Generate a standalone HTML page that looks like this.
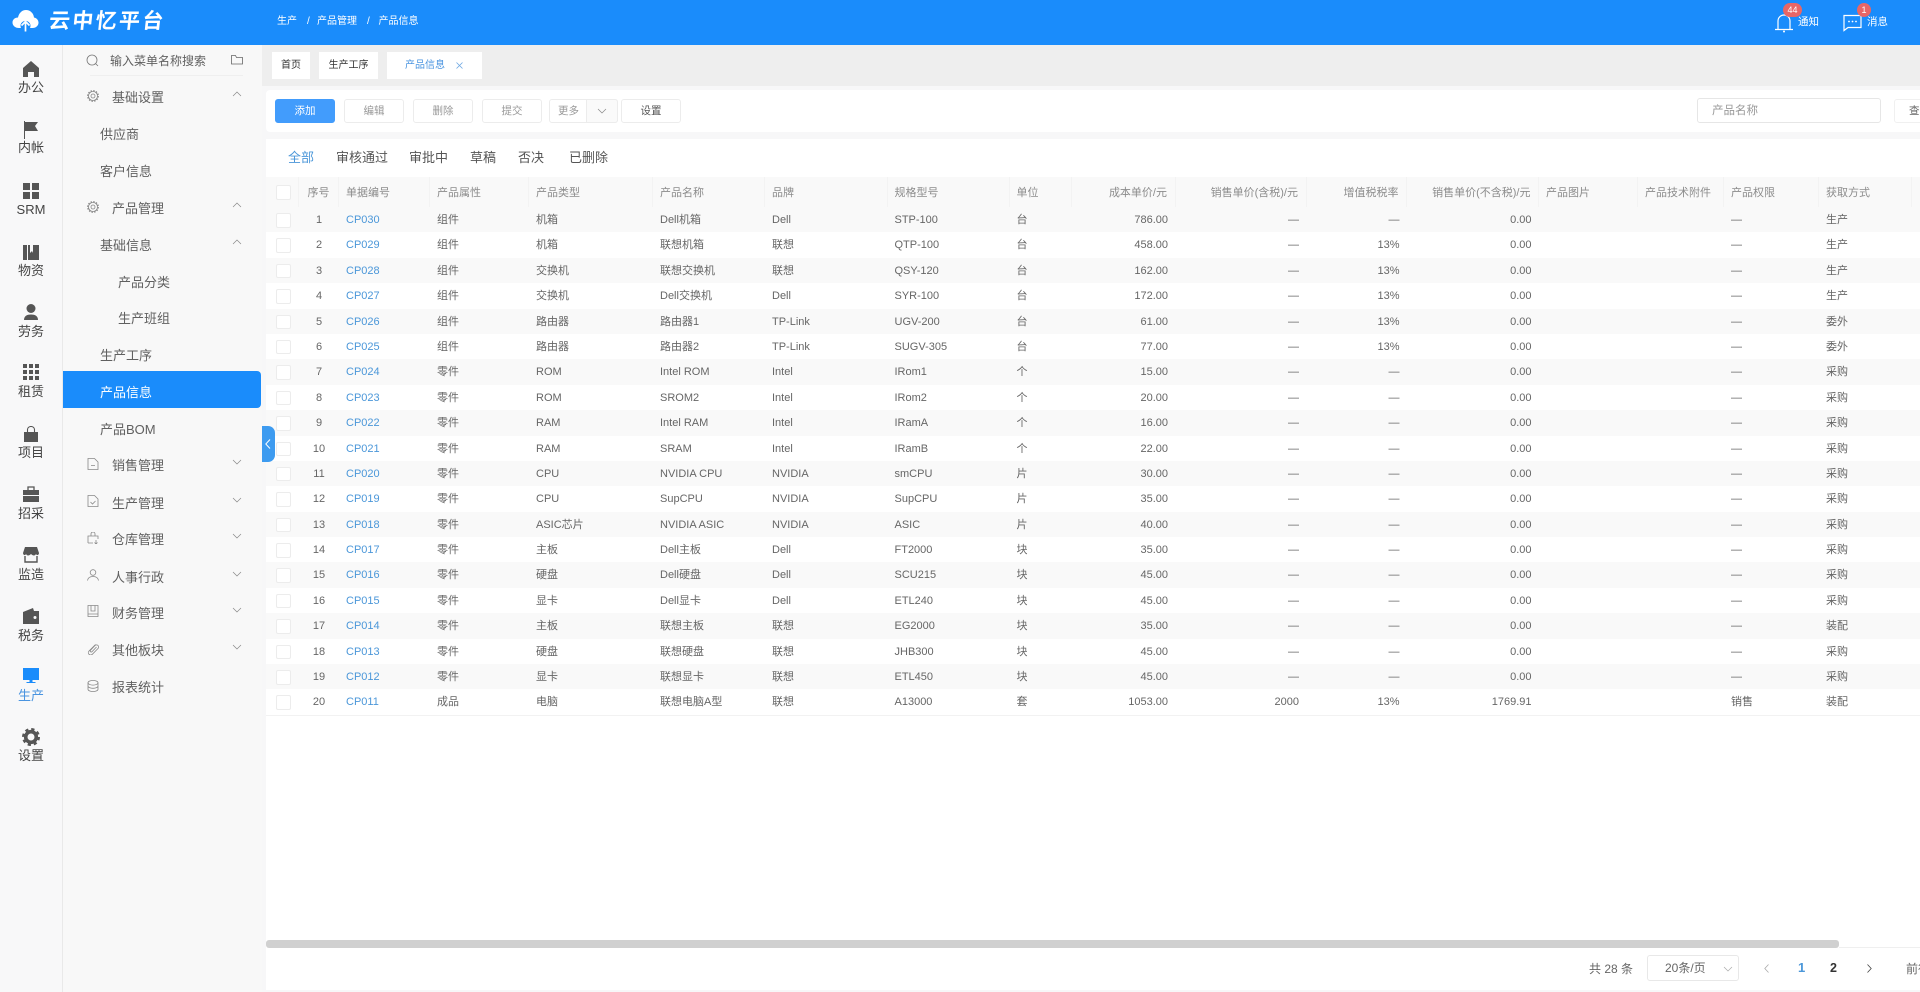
<!DOCTYPE html>
<html lang="zh-CN"><head><meta charset="utf-8"><title>产品信息</title>
<style>
*{box-sizing:border-box;margin:0;padding:0}
html{width:1920px;height:992px;overflow:hidden;background:#f7f7f8}
body{width:1920px;height:992px;overflow:hidden;background:#f7f7f8;font-family:"Liberation Sans","Noto Sans CJK SC",sans-serif;color:#555;filter:blur(.3px)}
.a{position:absolute;white-space:nowrap}
#hd{position:absolute;left:0;top:0;width:1920px;height:45px;background:#1a8cfb;color:#fff}
#rail{position:absolute;left:0;top:45px;width:63px;height:947px;background:#f8f8f9;border-right:1px solid #e9e9e9}
.ic{position:absolute;left:23px;width:16px;height:16px}
.lb{position:absolute;left:0;width:62px;text-align:center;font-size:13px;line-height:16px;color:#444;margin-top:1px}
#menu{position:absolute;left:63px;top:45px;width:199px;height:947px;background:#f8f8f8}
.m{position:absolute;font-size:13px;line-height:18px;color:#606060;white-space:nowrap;margin-top:1px}
.mi{position:absolute;left:24px;width:12px;height:12px}
.ch{position:absolute;left:169px;width:10px;height:6px}
#tabs{position:absolute;left:262px;top:45px;width:1658px;height:41px;background:#eeeeee}
.tab{position:absolute;top:52px;height:27px;background:#fff;font-size:10px;line-height:27px;text-align:center;color:#333}
.pn{position:absolute;left:266px;background:#fff}
.btn{position:absolute;top:99px;height:24px;width:60px;border:1px solid #ececec;border-radius:3px;background:#fff;font-size:10.5px;line-height:23px;text-align:center;color:#999}
.t{position:absolute;top:149px;font-size:13px;line-height:18px;color:#555;white-space:nowrap}
#tb{position:absolute;left:266px;top:177px;width:1654px;overflow:hidden}
.r{display:grid;grid-template-columns:33px 40px 91px 99px 124px 112px 122.5px 122px 62.5px 103.5px 131px 100.5px 132px 99px 86px 95px 93px 60px;height:25.4px;font-size:11px;line-height:25.4px;color:#666;background:#fff}
.r:nth-child(even){background:#f9f9f9}
.r span{padding:1px 7.5px 0 7px;white-space:nowrap;overflow:hidden}
.r span:nth-child(2){text-align:center;padding:1px 0 0}
.r span:nth-child(3){color:#4b97d9}
.r span:nth-child(10),.r span:nth-child(11),.r span:nth-child(12),.r span:nth-child(13){text-align:right}
.r span:nth-child(1){padding:0;position:relative}
.r span:nth-child(1)::after{content:"";position:absolute;left:10px;top:6px;width:12.5px;height:12.5px;background:#fff;border:1px solid #ececec;border-radius:2px}
.h{height:30px;line-height:30px;background:#f9f9f9!important;color:#8c8c8c}
.h span{border-right:1px solid #f3f3f3;color:#8c8c8c!important}
.h span:nth-child(1)::after{top:8px!important}
</style></head><body>

<div id="hd">
<svg class="a" style="left:12px;top:9px" width="27" height="23" viewBox="0 0 27 23"><path fill="#fff" d="M7 19C3 19 .5 16.500 .5 13.500S3 8.500 6 8.500C7 4 10 1 14 1s7.500 3 8 7.500c2.500.5 4.500 2.500 4.500 5.200S24 19 20.500 19h-2.500a5 5 0 1 0-9 0Z"/><path fill="none" stroke="#fff" stroke-width="1.700" d="M13.500 22.500V13M9.500 16.500l4-4 4 4"/></svg>
<div class="a" style="left:49px;top:7px;font-size:21px;line-height:30px;font-weight:700;letter-spacing:2.3px;transform:skewX(-6deg);transform-origin:left center">云中忆平台</div>
<div class="a" style="left:277px;top:14px;font-size:10px;line-height:16px">生产</div>
<div class="a" style="left:307px;top:14px;font-size:10px;line-height:16px">/</div>
<div class="a" style="left:317px;top:14px;font-size:10px;line-height:16px">产品管理</div>
<div class="a" style="left:367px;top:14px;font-size:10px;line-height:16px">/</div>
<div class="a" style="left:378.500px;top:14px;font-size:10px;line-height:16px">产品信息</div>
<svg class="a" style="left:1774px;top:12px" width="20" height="21" viewBox="0 0 20 21"><path fill="none" stroke="#fff" stroke-width="1.200" d="M1 17.500h18M4 17.500V9a6 6 0 0 1 12 0v8.500"/><circle cx="10" cy="19.500" r="1" fill="#fff"/></svg>
<div class="a" style="left:1783px;top:3px;width:19px;height:14px;border-radius:7px;background:#e86666;font-size:9px;line-height:14px;text-align:center">44</div>
<div class="a" style="left:1798px;top:14px;font-size:10.500px;line-height:16px">通知</div>
<svg class="a" style="left:1843px;top:14px" width="19" height="18" viewBox="0 0 19 18"><path fill="none" stroke="#fff" stroke-width="1.200" d="M1 1.500h17v12H5l-4 3Z"/><circle cx="6" cy="7.500" r=".9" fill="#fff"/><circle cx="9.500" cy="7.500" r=".9" fill="#fff"/><circle cx="13" cy="7.500" r=".9" fill="#fff"/></svg>
<div class="a" style="left:1857px;top:3px;width:14px;height:14px;border-radius:7px;background:#e86666;font-size:9px;line-height:14px;text-align:center">1</div>
<div class="a" style="left:1867px;top:14px;font-size:10.500px;line-height:16px">消息</div>
</div>

<div id="rail">
<svg class="ic" style="top:16px" viewBox="0 0 16 16"><path fill="#555" d="M8 0 16 7v9h-5v-5H5v5H0V7Z"/></svg><div class="lb" style="top:34px">办公</div>
<svg class="ic" style="top:76px;height:18px" viewBox="0 0 16 18"><path fill="#555" d="M1 0h1v18H1zM2 1h13l-3 4 3 5H2z"/></svg><div class="lb" style="top:94px">内帐</div>
<svg class="ic" style="top:138px" viewBox="0 0 16 16"><path fill="#555" d="M0 0h7v7H0zM9 0h7v7H9zM0 9h7v7H0zM9 9h7v7H9z"/></svg><div class="lb" style="top:156px">SRM</div>
<svg class="ic" style="top:199px" viewBox="0 0 16 16"><path fill="#555" d="M0 1h4v15H0zM5 1h2v8l2-2 1 2V1h6v15H5z"/></svg><div class="lb" style="top:217px">物资</div>
<svg class="ic" style="top:259px" viewBox="0 0 16 16"><circle cx="8" cy="4.500" r="4.500" fill="#555"/><path fill="#555" d="M1 16c0-4 3-5.500 7-5.500s7 1.500 7 5.500Z"/></svg><div class="lb" style="top:278px">劳务</div>
<svg class="ic" style="top:319px" viewBox="0 0 16 16"><path fill="#555" d="M0 0h4v4H0zM6 0h4v4H6zM12 0h4v4h-4zM0 6h4v4H0zM6 6h4v4H6zM12 6h4v4h-4zM0 12h4v4H0zM6 12h4v4H6zM12 12h4v4h-4z"/></svg><div class="lb" style="top:338px">租赁</div>
<svg class="ic" style="top:381px" viewBox="0 0 16 16"><path fill="#555" d="M1 6h14v10H1z"/><path fill="none" stroke="#555" stroke-width="1.100" d="M4.500 6V3.500a3.500 3 0 0 1 7 0V6"/></svg><div class="lb" style="top:399px">项目</div>
<svg class="ic" style="top:441px" viewBox="0 0 16 16"><path fill="#555" d="M0 4h16v5H0zM0 10h16v6H0z"/><path fill="none" stroke="#555" stroke-width="1.300" d="M5 4V1h6v3"/></svg><div class="lb" style="top:460px">招采</div>
<svg class="ic" style="top:502px" viewBox="0 0 16 16"><path fill="#555" d="M2 0h12l2 6c0 2-2 3-3 1-1 2-3 2-5 0-2 2-4 2-5 0-1 2-3 1-3-1Z"/><path fill="none" stroke="#555" stroke-width="1.400" d="M2 9v6h12V9"/></svg><div class="lb" style="top:521px">监造</div>
<svg class="ic" style="top:563px" viewBox="0 0 16 16"><path fill="#555" d="M0 4l10-4 1 3h5v13H0z"/><circle cx="12" cy="9.500" r="1.500" fill="#f8f8f9"/></svg><div class="lb" style="top:582px">税务</div>
<svg class="ic" style="top:623px" viewBox="0 0 16 16"><path fill="#1a8cfb" d="M0 0h16v12H0zM6.500 12h3v2h3v1h-9v-1h3z"/></svg><div class="lb" style="top:642px;color:#4a94e0">生产</div>
<svg class="ic" style="top:683px;left:22px;width:18px;height:18px" viewBox="0 0 18 18"><circle cx="9" cy="9" r="5.300" fill="none" stroke="#555" stroke-width="3.600"/><circle cx="9" cy="9" r="7.500" fill="none" stroke="#555" stroke-width="3" stroke-dasharray="3.100 2.790"/></svg><div class="lb" style="top:702px">设置</div>
</div>

<div id="menu">
<svg class="a" style="left:23px;top:9px" width="13" height="13" viewBox="0 0 13 13"><circle cx="6" cy="6" r="5" fill="none" stroke="#777" stroke-width=".8"/><path d="M9.500 9.500l2.500 2.500" stroke="#777" stroke-width=".8"/></svg>
<div class="m" style="left:47px;top:7px;font-size:12px;margin-top:0">输入菜单名称搜索</div>
<svg class="a" style="left:168px;top:10px" width="12" height="10" viewBox="0 0 12 10"><path fill="none" stroke="#666" stroke-width=".8" d="M.5 9V.5h4l1 2h6V9Z"/></svg>
<div class="a" style="left:27px;top:30px;width:153px;height:1px;background:#efefef"></div>

<svg class="mi" style="top:45px" viewBox="0 0 12 12"><circle cx="6" cy="6" r="4.500" fill="none" stroke="#888" stroke-width=".8"/><circle cx="6" cy="6" r="5.300" fill="none" stroke="#888" stroke-width="1.200" stroke-dasharray="1.500 1.280"/><circle cx="6" cy="6" r="2" fill="none" stroke="#888" stroke-width=".8"/></svg>
<div class="m" style="left:49px;top:43px">基础设置</div>
<svg class="ch" style="top:46px" viewBox="0 0 10 6"><path fill="none" stroke="#888" stroke-width=".7" d="M1 5l4-4 4 4"/></svg>
<div class="m" style="left:37px;top:80px">供应商</div>
<div class="m" style="left:37px;top:117px">客户信息</div>
<svg class="mi" style="top:156px" viewBox="0 0 12 12"><circle cx="6" cy="6" r="4.500" fill="none" stroke="#888" stroke-width=".8"/><circle cx="6" cy="6" r="5.300" fill="none" stroke="#888" stroke-width="1.200" stroke-dasharray="1.500 1.280"/><circle cx="6" cy="6" r="2" fill="none" stroke="#888" stroke-width=".8"/></svg>
<div class="m" style="left:49px;top:154px">产品管理</div>
<svg class="ch" style="top:157px" viewBox="0 0 10 6"><path fill="none" stroke="#888" stroke-width=".7" d="M1 5l4-4 4 4"/></svg>
<div class="m" style="left:37px;top:191px">基础信息</div>
<svg class="ch" style="top:194px" viewBox="0 0 10 6"><path fill="none" stroke="#888" stroke-width=".7" d="M1 5l4-4 4 4"/></svg>
<div class="m" style="left:55px;top:228px">产品分类</div>
<div class="m" style="left:55px;top:264px">生产班组</div>
<div class="m" style="left:37px;top:301px">生产工序</div>
<div class="a" style="left:0;top:326px;width:198px;height:37px;background:#1a8cfb;border-radius:0 4px 4px 0"></div>
<div class="m" style="left:37px;top:338px;color:#fff">产品信息</div>
<div class="m" style="left:37px;top:375px">产品BOM</div>

<svg class="mi" style="top:413px" viewBox="0 0 12 12"><path fill="none" stroke="#888" stroke-width=".8" d="M1 .5h6.500L11 4v7.500H1ZM4 7.500h4"/></svg>
<div class="m" style="left:49px;top:411px">销售管理</div>
<svg class="ch" style="top:414px" viewBox="0 0 10 6"><path fill="none" stroke="#888" stroke-width=".7" d="M1 1l4 4 4-4"/></svg>
<svg class="mi" style="top:450px" viewBox="0 0 12 12"><path fill="none" stroke="#888" stroke-width=".8" d="M1 .5h6.500L11 4v7.500H1ZM3.500 7l2 2 3-3"/></svg>
<div class="m" style="left:49px;top:449px">生产管理</div>
<svg class="ch" style="top:452px" viewBox="0 0 10 6"><path fill="none" stroke="#888" stroke-width=".7" d="M1 1l4 4 4-4"/></svg>
<svg class="mi" style="top:487px" viewBox="0 0 12 12"><path fill="none" stroke="#888" stroke-width=".8" d="M1 11V4h10v3M4 4V2a2 2 0 0 1 4 0v2M1 11h5M9 8v3.500M7.500 10.500l1.500 1.500 1.500-1.500"/></svg>
<div class="m" style="left:49px;top:485px">仓库管理</div>
<svg class="ch" style="top:488px" viewBox="0 0 10 6"><path fill="none" stroke="#888" stroke-width=".7" d="M1 1l4 4 4-4"/></svg>
<svg class="mi" style="top:524px" viewBox="0 0 12 12"><circle cx="6" cy="3.500" r="2.800" fill="none" stroke="#888" stroke-width=".8"/><path fill="none" stroke="#888" stroke-width=".8" d="M.5 11.500c.5-3 3-4 5.500-4s5 1 5.500 4"/></svg>
<div class="m" style="left:49px;top:523px">人事行政</div>
<svg class="ch" style="top:526px" viewBox="0 0 10 6"><path fill="none" stroke="#888" stroke-width=".7" d="M1 1l4 4 4-4"/></svg>
<svg class="mi" style="top:560px" viewBox="0 0 12 12"><path fill="none" stroke="#888" stroke-width=".8" d="M1 .5h10v11H1ZM1 9h10M4 .5V6h4V.5"/></svg>
<div class="m" style="left:49px;top:559px">财务管理</div>
<svg class="ch" style="top:562px" viewBox="0 0 10 6"><path fill="none" stroke="#888" stroke-width=".7" d="M1 1l4 4 4-4"/></svg>
<svg class="mi" style="top:598px" viewBox="0 0 12 12"><path fill="none" stroke="#888" stroke-width=".8" d="M8.500 1.500 2 8a2.300 2.300 0 0 0 3.300 3.300L11 5.500A2.100 2.100 0 0 0 8 2.500L3.500 7.200a1 1 0 0 0 1.500 1.500L9.500 4"/></svg>
<div class="m" style="left:49px;top:596px">其他板块</div>
<svg class="ch" style="top:599px" viewBox="0 0 10 6"><path fill="none" stroke="#888" stroke-width=".7" d="M1 1l4 4 4-4"/></svg>
<svg class="mi" style="top:635px" viewBox="0 0 12 12"><ellipse cx="6" cy="2.800" rx="5" ry="2.300" fill="none" stroke="#888" stroke-width=".8"/><path fill="none" stroke="#888" stroke-width=".8" d="M1 2.800v6.400c0 1.300 2.200 2.300 5 2.300s5-1 5-2.300V2.800M1 6c0 1.300 2.200 2.300 5 2.300S11 7.300 11 6"/></svg>
<div class="m" style="left:49px;top:633px">报表统计</div>
</div>

<div id="tabs"></div>
<div class="tab" style="left:272px;width:38px">首页</div>
<div class="tab" style="left:319px;width:59px">生产工序</div>
<div class="tab" style="left:387px;width:95px"></div>
<div class="a" style="left:405px;top:52px;font-size:10px;line-height:27px;color:#4a94e0">产品信息</div>
<svg class="a" style="left:456px;top:62px" width="7" height="7" viewBox="0 0 7 7"><path d="M.5.500l6 6M6.500.5l-6 6" stroke="#6da7e2" stroke-width=".8"/></svg>

<div class="pn" style="top:90px;width:1654px;height:42px;border-radius:4px 0 0 4px"></div>
<div class="btn" style="left:275px;background:#429cfc;border-color:#429cfc;color:#fff">添加</div>
<div class="btn" style="left:344px">编辑</div>
<div class="btn" style="left:413px">删除</div>
<div class="btn" style="left:482px">提交</div>
<div class="btn" style="left:549px;width:69px;text-align:left;padding-left:8px">更多</div>
<div class="a" style="left:586px;top:99px;width:32px;height:24px;background:#fafafa;border:1px solid #ececec;border-radius:0 3px 3px 0"></div>
<svg class="a" style="left:597px;top:108px" width="10" height="6" viewBox="0 0 10 6"><path fill="none" stroke="#888" stroke-width=".7" d="M1 1l4 4 4-4"/></svg>
<div class="btn" style="left:621px;color:#555">设置</div>
<div class="a" style="left:1697px;top:98px;width:184px;height:25px;border:1px solid #e6e6e6;border-radius:3px;font-size:11.500px;line-height:25px;padding-left:14px;color:#999">产品名称</div>
<div class="a" style="left:1894px;top:99px;width:60px;height:24px;border:1px solid #f0f0f0;border-radius:3px;font-size:10.500px;line-height:23px;padding-left:14px;color:#666">查询</div>

<div class="pn" style="top:139px;width:1654px;height:851px"></div>
<div class="t" style="left:288px;color:#4b97d9">全部</div>
<div class="t" style="left:336px">审核通过</div>
<div class="t" style="left:409px">审批中</div>
<div class="t" style="left:470px">草稿</div>
<div class="t" style="left:518px">否决</div>
<div class="t" style="left:569px">已删除</div>

<div id="tb">
<div class="r h"><span></span><span>序号</span><span>单据编号</span><span>产品属性</span><span>产品类型</span><span>产品名称</span><span>品牌</span><span>规格型号</span><span>单位</span><span>成本单价/元</span><span>销售单价(含税)/元</span><span>增值税税率</span><span>销售单价(不含税)/元</span><span>产品图片</span><span>产品技术附件</span><span>产品权限</span><span>获取方式</span><span></span></div>
<div class="r"><span></span><span>1</span><span>CP030</span><span>组件</span><span>机箱</span><span>Dell机箱</span><span>Dell</span><span>STP-100</span><span>台</span><span>786.00</span><span>—</span><span>—</span><span>0.00</span><span></span><span></span><span>—</span><span>生产</span><span></span></div>
<div class="r"><span></span><span>2</span><span>CP029</span><span>组件</span><span>机箱</span><span>联想机箱</span><span>联想</span><span>QTP-100</span><span>台</span><span>458.00</span><span>—</span><span>13%</span><span>0.00</span><span></span><span></span><span>—</span><span>生产</span><span></span></div>
<div class="r"><span></span><span>3</span><span>CP028</span><span>组件</span><span>交换机</span><span>联想交换机</span><span>联想</span><span>QSY-120</span><span>台</span><span>162.00</span><span>—</span><span>13%</span><span>0.00</span><span></span><span></span><span>—</span><span>生产</span><span></span></div>
<div class="r"><span></span><span>4</span><span>CP027</span><span>组件</span><span>交换机</span><span>Dell交换机</span><span>Dell</span><span>SYR-100</span><span>台</span><span>172.00</span><span>—</span><span>13%</span><span>0.00</span><span></span><span></span><span>—</span><span>生产</span><span></span></div>
<div class="r"><span></span><span>5</span><span>CP026</span><span>组件</span><span>路由器</span><span>路由器1</span><span>TP-Link</span><span>UGV-200</span><span>台</span><span>61.00</span><span>—</span><span>13%</span><span>0.00</span><span></span><span></span><span>—</span><span>委外</span><span></span></div>
<div class="r"><span></span><span>6</span><span>CP025</span><span>组件</span><span>路由器</span><span>路由器2</span><span>TP-Link</span><span>SUGV-305</span><span>台</span><span>77.00</span><span>—</span><span>13%</span><span>0.00</span><span></span><span></span><span>—</span><span>委外</span><span></span></div>
<div class="r"><span></span><span>7</span><span>CP024</span><span>零件</span><span>ROM</span><span>Intel ROM</span><span>Intel</span><span>IRom1</span><span>个</span><span>15.00</span><span>—</span><span>—</span><span>0.00</span><span></span><span></span><span>—</span><span>采购</span><span></span></div>
<div class="r"><span></span><span>8</span><span>CP023</span><span>零件</span><span>ROM</span><span>SROM2</span><span>Intel</span><span>IRom2</span><span>个</span><span>20.00</span><span>—</span><span>—</span><span>0.00</span><span></span><span></span><span>—</span><span>采购</span><span></span></div>
<div class="r"><span></span><span>9</span><span>CP022</span><span>零件</span><span>RAM</span><span>Intel RAM</span><span>Intel</span><span>IRamA</span><span>个</span><span>16.00</span><span>—</span><span>—</span><span>0.00</span><span></span><span></span><span>—</span><span>采购</span><span></span></div>
<div class="r"><span></span><span>10</span><span>CP021</span><span>零件</span><span>RAM</span><span>SRAM</span><span>Intel</span><span>IRamB</span><span>个</span><span>22.00</span><span>—</span><span>—</span><span>0.00</span><span></span><span></span><span>—</span><span>采购</span><span></span></div>
<div class="r"><span></span><span>11</span><span>CP020</span><span>零件</span><span>CPU</span><span>NVIDIA CPU</span><span>NVIDIA</span><span>smCPU</span><span>片</span><span>30.00</span><span>—</span><span>—</span><span>0.00</span><span></span><span></span><span>—</span><span>采购</span><span></span></div>
<div class="r"><span></span><span>12</span><span>CP019</span><span>零件</span><span>CPU</span><span>SupCPU</span><span>NVIDIA</span><span>SupCPU</span><span>片</span><span>35.00</span><span>—</span><span>—</span><span>0.00</span><span></span><span></span><span>—</span><span>采购</span><span></span></div>
<div class="r"><span></span><span>13</span><span>CP018</span><span>零件</span><span>ASIC芯片</span><span>NVIDIA ASIC</span><span>NVIDIA</span><span>ASIC</span><span>片</span><span>40.00</span><span>—</span><span>—</span><span>0.00</span><span></span><span></span><span>—</span><span>采购</span><span></span></div>
<div class="r"><span></span><span>14</span><span>CP017</span><span>零件</span><span>主板</span><span>Dell主板</span><span>Dell</span><span>FT2000</span><span>块</span><span>35.00</span><span>—</span><span>—</span><span>0.00</span><span></span><span></span><span>—</span><span>采购</span><span></span></div>
<div class="r"><span></span><span>15</span><span>CP016</span><span>零件</span><span>硬盘</span><span>Dell硬盘</span><span>Dell</span><span>SCU215</span><span>块</span><span>45.00</span><span>—</span><span>—</span><span>0.00</span><span></span><span></span><span>—</span><span>采购</span><span></span></div>
<div class="r"><span></span><span>16</span><span>CP015</span><span>零件</span><span>显卡</span><span>Dell显卡</span><span>Dell</span><span>ETL240</span><span>块</span><span>45.00</span><span>—</span><span>—</span><span>0.00</span><span></span><span></span><span>—</span><span>采购</span><span></span></div>
<div class="r"><span></span><span>17</span><span>CP014</span><span>零件</span><span>主板</span><span>联想主板</span><span>联想</span><span>EG2000</span><span>块</span><span>35.00</span><span>—</span><span>—</span><span>0.00</span><span></span><span></span><span>—</span><span>装配</span><span></span></div>
<div class="r"><span></span><span>18</span><span>CP013</span><span>零件</span><span>硬盘</span><span>联想硬盘</span><span>联想</span><span>JHB300</span><span>块</span><span>45.00</span><span>—</span><span>—</span><span>0.00</span><span></span><span></span><span>—</span><span>采购</span><span></span></div>
<div class="r"><span></span><span>19</span><span>CP012</span><span>零件</span><span>显卡</span><span>联想显卡</span><span>联想</span><span>ETL450</span><span>块</span><span>45.00</span><span>—</span><span>—</span><span>0.00</span><span></span><span></span><span>—</span><span>采购</span><span></span></div>
<div class="r"><span></span><span>20</span><span>CP011</span><span>成品</span><span>电脑</span><span>联想电脑A型</span><span>联想</span><span>A13000</span><span>套</span><span>1053.00</span><span>2000</span><span>13%</span><span>1769.91</span><span></span><span></span><span>销售</span><span>装配</span><span></span></div>
</div>
<div class="a" style="left:266px;top:715px;width:1654px;height:1px;background:#f2f2f2"></div>

<div class="a" style="left:262px;top:426px;width:13px;height:36px;background:#3d9bf0;border-radius:0 7px 7px 0"></div>
<svg class="a" style="left:265px;top:439px" width="6" height="10" viewBox="0 0 6 10"><path fill="none" stroke="#fff" d="M5 .5.800 5 5 9.500"/></svg>

<div class="a" style="left:266px;top:940px;width:1573px;height:8px;background:#d0d0d0;border-radius:3px"></div>
<div class="a" style="left:1839px;top:947px;width:81px;height:1px;background:#efefef"></div>
<div class="a" style="left:1589px;top:961px;font-size:12px;line-height:16px;color:#666">共 28 条</div>
<div class="a" style="left:1647px;top:955px;width:92px;height:26px;border:1px solid #e8e8e8;border-radius:3px;font-size:12px;line-height:24px;padding-left:17px;color:#666">20条/页</div>
<svg class="a" style="left:1723px;top:966px" width="10" height="6" viewBox="0 0 10 6"><path fill="none" stroke="#aaa" stroke-width=".7" d="M1 1l4 4 4-4"/></svg>
<svg class="a" style="left:1764px;top:964px" width="5" height="9" viewBox="0 0 5 9"><path fill="none" stroke="#aaa" stroke-width=".8" d="M4.500 .5.800 4.500 4.500 8.500"/></svg>
<div class="a" style="left:1798px;top:959px;font-size:13px;line-height:18px;font-weight:700;color:#4b97d9">1</div>
<div class="a" style="left:1830px;top:959px;font-size:12.500px;line-height:18px;font-weight:700;color:#333">2</div>
<svg class="a" style="left:1867px;top:964px" width="5" height="9" viewBox="0 0 5 9"><path fill="none" stroke="#444" stroke-width=".8" d="M.5 .5 4.200 4.500 .5 8.500"/></svg>
<div class="a" style="left:1906px;top:961px;font-size:12px;line-height:16px;color:#666">前往</div>
</body></html>
